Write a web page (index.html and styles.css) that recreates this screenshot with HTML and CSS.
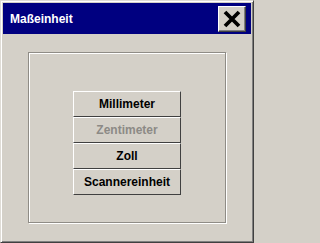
FILE: index.html
```html
<!DOCTYPE html>
<html>
<head>
<meta charset="utf-8">
<link rel="stylesheet" href="styles.css">
</head>
<body>
<div class="window">
  <div class="titlebar">
    <span class="title">Maßeinheit</span>
    <div class="close">
      <svg width="18" height="18" viewBox="0 0 18 18"><path d="M2 2 L16 16 M16 2 L2 16" stroke="#000" stroke-width="3.8" fill="none"/></svg>
    </div>
  </div>
  <div class="frame">
    <div class="buttons">
      <div class="btn">Millimeter</div>
      <div class="btn disabled">Zentimeter</div>
      <div class="btn">Zoll</div>
      <div class="btn">Scannereinheit</div>
    </div>
  </div>
</div>
</body>
</html>
```
FILE: styles.css
```css
html, body { margin: 0; padding: 0; background: #d4d0c8; }
.window {
  width: 254px; height: 243px; box-sizing: border-box;
  background: #d4d0c8;
  border-top: 1px solid #dfdcd6; border-left: 1px solid #dfdcd6;
  border-right: 1px solid #404040; border-bottom: 1px solid #404040;
  box-shadow: inset 1px 1px #ffffff, inset -1px -1px #808080;
  padding: 2px;
  font-family: "Liberation Sans", Arial, sans-serif;
}
.titlebar {
  height: 31px; background: #000080;
  display: flex; align-items: center; justify-content: space-between;
  padding: 0 5px 0 7px;
}
.title { color: #fff; font-weight: bold; font-size: 12px; }
.close {
  width: 28px; height: 26px; box-sizing: border-box;
  background: #d4d0c8;
  border-top: 1px solid #fff; border-left: 1px solid #fff;
  border-right: 1px solid #404040; border-bottom: 1px solid #404040;
  box-shadow: inset -1px -1px #808080;
  display: flex; align-items: center; justify-content: center;
}
.frame {
  margin: 18px 0 0 25px;
  width: 198px; height: 171px; box-sizing: border-box;
  border: 1px solid #8f8c86;
  box-shadow: inset 1px 1px #fff, 1px 1px #fff;
  padding-top: 38px;
  display: flex; justify-content: center;
}
.buttons { display: flex; flex-direction: column; }
.btn {
  width: 108px; height: 26px; box-sizing: border-box;
  border-top: 1px solid #fff; border-left: 1px solid #fff;
  border-right: 1px solid #404040; border-bottom: 1px solid #404040;
  display: flex; align-items: center; justify-content: center;
  font-weight: bold; font-size: 12px; color: #000;
}
.btn.disabled { color: #8c8a86; }
```
